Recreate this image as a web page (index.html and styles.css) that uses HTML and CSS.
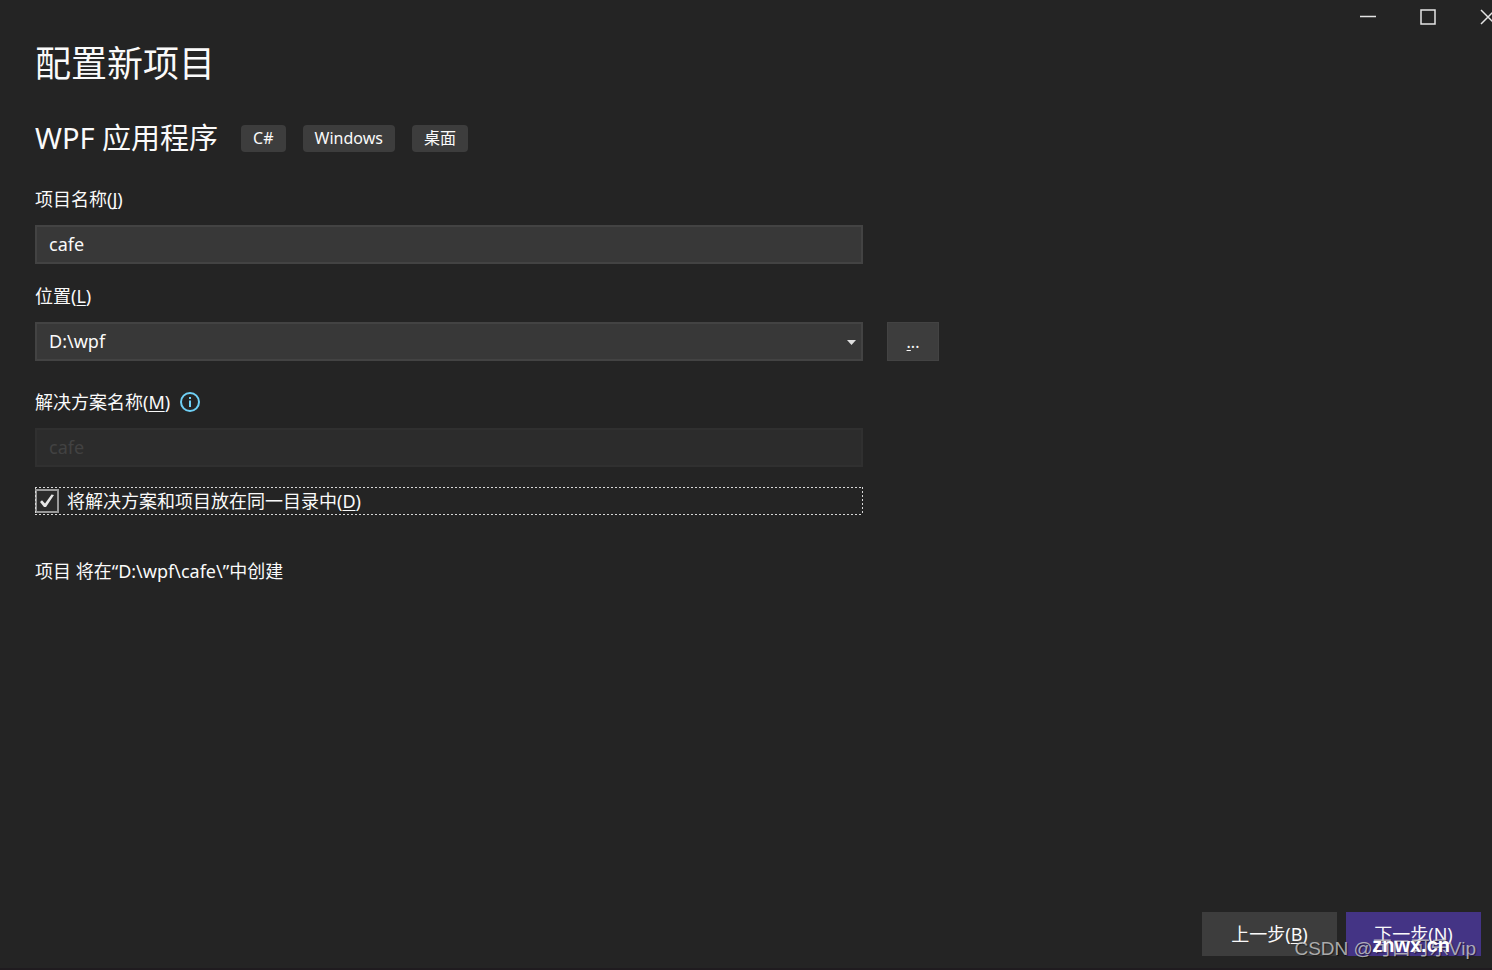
FILE: index.html
```html
<!DOCTYPE html>
<html lang="zh-CN">
<head>
<meta charset="utf-8">
<title>配置新项目</title>
<link rel="stylesheet" href="styles.css">
</head>
<body>
<div class="window">
  <header class="titlebar">
    <button class="caption" type="button" aria-label="最小化"><svg width="16" height="16" viewBox="0 0 16 16"><path d="M0 7.5h16"/></svg></button>
    <button class="caption" type="button" aria-label="最大化"><svg width="16" height="16" viewBox="0 0 16 16"><path d="M1 1h14v14H1z"/></svg></button>
    <button class="caption" type="button" aria-label="关闭"><svg width="16" height="16" viewBox="0 0 16 16"><path d="M1 1l14 14M15 1L1 15"/></svg></button>
  </header>
  <main class="content">
    <h1 class="title">配置新项目</h1>
    <div class="template">
      <h2 class="template-name">WPF 应用程序</h2>
      <ul class="tags">
        <li class="tag">C#</li>
        <li class="tag">Windows</li>
        <li class="tag">桌面</li>
      </ul>
    </div>
    <form class="form" id="project">
      <div class="field">
        <label class="label" for="name">项目名称(<u>J</u>)</label>
        <input class="box" id="name" type="text" value="cafe">
      </div>
      <div class="field">
        <label class="label" for="location">位置(<u>L</u>)</label>
        <div class="location">
          <div class="combo">
            <select class="box" id="location"><option>D:\wpf</option></select>
            <svg class="arrow" width="9" height="5" viewBox="0 0 9 5"><path d="M0 0h9L4.500 5z"/></svg>
          </div>
          <button class="browse" type="button" aria-label="浏览"><u>.</u>..</button>
        </div>
      </div>
      <div class="field solution">
        <div class="label-row">
          <label class="label" for="solution">解决方案名称(<u>M</u>)</label>
          <svg class="info" width="20" height="20" viewBox="0 0 20 20"><circle cx="10" cy="10" r="9"/><path d="M10 8.500v6.500M10 5v2"/></svg>
        </div>
        <input class="box" id="solution" type="text" value="cafe" disabled>
      </div>
      <label class="check" for="same">
        <input class="tick" id="same" type="checkbox" checked>
        <svg class="mark" width="14" height="14" viewBox="0 0 14 14"><path d="M0 8L2 6.300L5 9.500L11.500 0.500L14 1L6 13H4z"/></svg>
        <span>将解决方案和项目放在同一目录中(<u>D</u>)</span>
      </label>
    </form>
    <p class="summary">项目 将在“D:\wpf\cafe\”中创建</p>
  </main>
  <footer class="actions">
    <button class="action" type="button">上一步(<u>B</u>)</button>
    <button class="action primary" type="submit" form="project">下一步(<u>N</u>)</button>
  </footer>
  <span class="credit">CSDN @可口可乐Vip</span>
  <span class="site">znwx.cn</span>
</div>
</body>
</html>
```
FILE: styles.css
```css
* { box-sizing: border-box; }

body {
  margin: 0;
  background: #242424;
  color: #fafafa;
  font: 18px/24px "Noto Sans", "Noto Sans CJK SC", sans-serif;
}

button, input, select { font: inherit; color: inherit; }
u {
  text-decoration-thickness: 1px;
  text-underline-offset: 2px;
  text-decoration-skip-ink: none;
}

.window {
  position: relative;
  display: flex;
  flex-direction: column;
  min-height: 100vh;
  overflow: hidden;
  border-bottom: 2px solid #1f1b1f;
}

.titlebar {
  display: flex;
  justify-content: flex-end;
  height: 34px;
  margin-right: -26px;
}
.caption {
  display: grid;
  place-items: center;
  width: 60px;
  padding: 0;
  border: 0;
  background: none;
}
.caption svg { fill: none; stroke: #e4e4e4; stroke-width: 1.500; }

.content { flex: 1; padding: 6px 35px 0; }
.title { margin: 0; font-size: 36px; line-height: 48px; font-weight: 400; }
.template { display: flex; align-items: center; gap: 23px; margin-top: 29px; }
.template-name { margin: 0; font-size: 29px; line-height: 42px; font-weight: 400; }
.tags { display: flex; gap: 17px; margin: 0; padding: 0; list-style: none; }
.tag {
  height: 27px;
  padding: 0 12px;
  border-radius: 4px;
  background: #3d3d3d;
  font-size: 16px;
  line-height: 27px;
}

.form { width: 100%; max-width: 828px; margin-top: 28px; }
.field { display: flex; flex-direction: column; gap: 14px; margin-bottom: 20px; }
.solution { margin-top: 29px; }
.label-row { display: flex; align-items: center; gap: 10px; }
.box {
  display: block;
  width: 100%;
  height: 39px;
  padding: 0 12px 2px;
  border: 2px solid #434343;
  border-radius: 0;
  background: #383838;
  appearance: none;
  outline: 0;
}
.box:disabled { border-color: #303030; background: #2c2c2c; color: #424242; opacity: 1; }
.location { display: grid; grid-template-columns: 100% 52px; column-gap: 24px; }
.combo { position: relative; }
.arrow { position: absolute; right: 7px; top: 18px; fill: #e0e0e0; pointer-events: none; }
.browse { padding: 0; border: 1px solid #434343; background: #3d3d3d; font-size: 16px; }
.info { fill: none; stroke: #6fd0f5; stroke-width: 2; }

.check {
  position: relative;
  display: flex;
  align-items: center;
  gap: 8px;
  height: 28px;
}
.check::after {
  content: "";
  position: absolute;
  inset: 0;
  pointer-events: none;
  background:
    repeating-linear-gradient(90deg, #d8d8d8 0 2px, transparent 2px 4px) top / 100% 1px no-repeat,
    repeating-linear-gradient(90deg, #d8d8d8 0 2px, transparent 2px 4px) bottom / 100% 1px no-repeat,
    repeating-linear-gradient(#d8d8d8 0 2px, transparent 2px 4px) left / 1px 100% no-repeat,
    repeating-linear-gradient(#d8d8d8 0 2px, transparent 2px 4px) right / 1px 100% no-repeat;
}
.tick {
  width: 24px;
  height: 24px;
  margin: 0;
  border: 2px solid #999;
  background: #2b2b2b;
  appearance: none;
}
.mark { position: absolute; left: 5px; top: 7px; fill: #e6e6e6; visibility: hidden; }
.tick:checked + .mark { visibility: visible; }
.summary { margin: 44px 0 0; }

.actions { display: flex; justify-content: flex-end; gap: 9px; padding: 0 11px 12px; }
.action { width: 135px; height: 44px; padding: 0; border: 0; background: #3d3d3d; }
.primary { background: #443485; }

.credit, .site { position: absolute; white-space: nowrap; pointer-events: none; }
.credit {
  right: 16px;
  bottom: 7px;
  color: rgba(205, 205, 205, .8);
  font-family: "Liberation Sans", "Noto Sans CJK SC", sans-serif;
  font-size: 19px;
  text-shadow: 1px 1px 1px rgba(0, 0, 0, .5);
}
.site {
  right: 42px;
  bottom: 11px;
  color: #fff;
  font-family: "Liberation Sans", sans-serif;
  font-size: 20px;
  font-weight: 700;
}
```
